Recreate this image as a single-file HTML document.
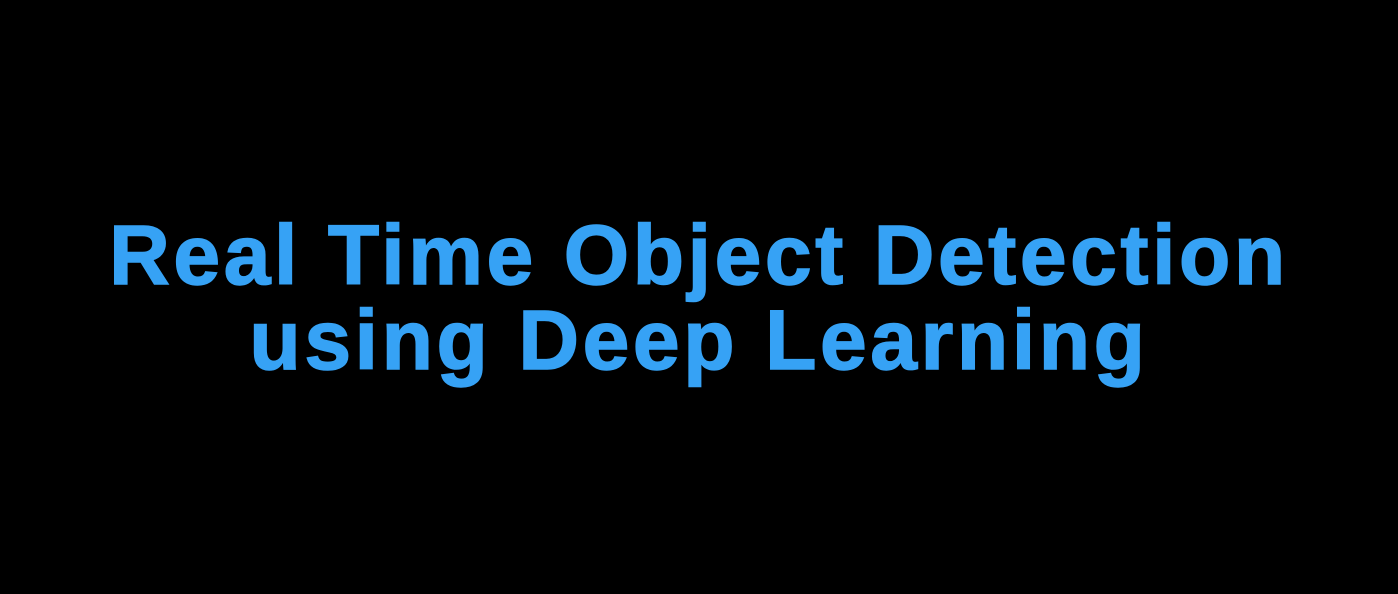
<!DOCTYPE html>
<html><head><meta charset="utf-8"><style>
html,body{margin:0;padding:0;background:#000;width:1398px;height:594px;overflow:hidden}
.t{position:absolute;left:0px;top:213px;width:1398px;text-align:center;font-family:"Liberation Sans",sans-serif;font-weight:bold;font-size:84px;line-height:85px;letter-spacing:3.6px;color:#36a2f5;-webkit-text-stroke:1.5px #36a2f5}
</style></head><body>
<div class="t">Real Time Object Detection<br>using Deep Learning</div>
</body></html>
